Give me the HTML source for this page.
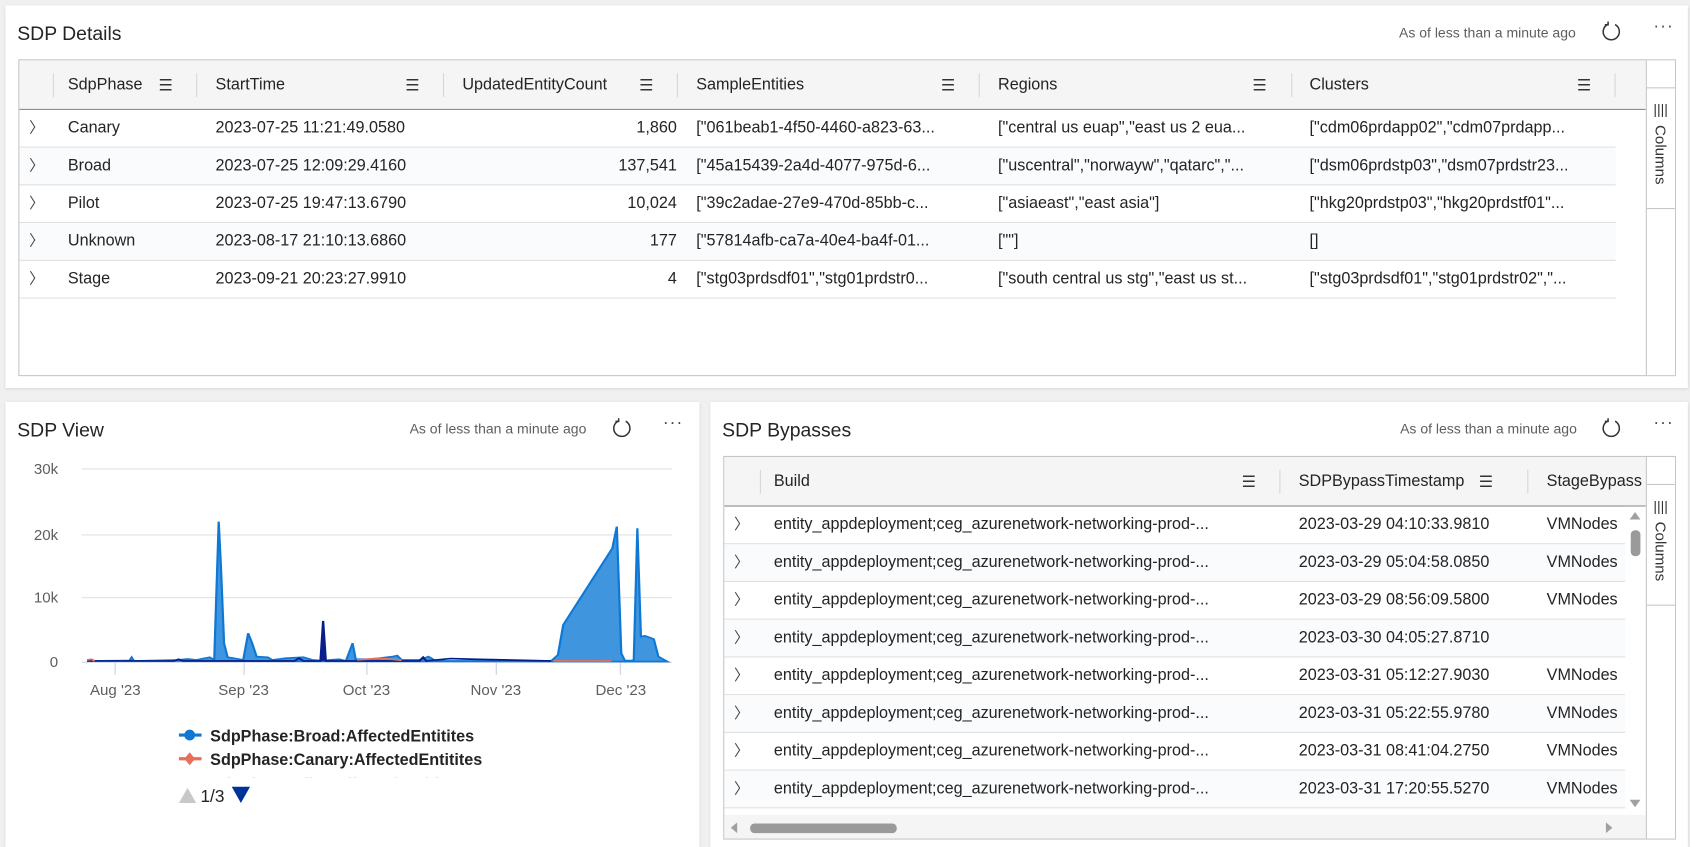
<!DOCTYPE html>
<html><head><meta charset="utf-8"><style>
*{box-sizing:border-box;margin:0;padding:0}
body{width:1690px;height:847px;background:#f0f0f0;font-family:"Liberation Sans",sans-serif;color:#201f1e;position:relative;overflow:hidden}
#w{position:absolute;left:0;top:0;width:1568px;height:786px;transform:scale(1.07781);transform-origin:0 0}
.panel{position:absolute;background:#fff;box-shadow:0 1px 3px rgba(0,0,0,.12)}
.title{position:absolute;left:11px;font-size:18px;color:#252423}
.asof{position:absolute;font-size:13px;color:#605e5c}
.ref{position:absolute;width:20px;height:20px}
.dots{position:absolute;font-size:16px;color:#444;letter-spacing:1px}
.tbl{position:absolute;border:1px solid #c8c6c4;overflow:hidden}
.hdr{position:absolute;left:0;top:0;height:46px;background:#f5f5f5;border-bottom:1px solid #8a8886;right:27px}
.h{position:absolute;top:14px;font-size:15px;color:#252423}
.sep{position:absolute;top:12px;width:1px;height:22px;background:#d6d6d6}
.mn{position:absolute;top:14px;font-size:15px;color:#333}
.row{position:absolute;left:0;height:35px;border-bottom:1px solid #e1dfdd;font-size:15px;color:#252423}
.row.alt{background:#fafbfd}
.row span{position:absolute;top:8px;white-space:nowrap}
.chev{color:#444;font-size:14px}
.colp{position:absolute;right:0;width:27px;border-left:1px solid #c8c6c4;background:#fff}
.colbox{position:absolute;left:0;width:27px;border-top:1px solid #c8c6c4;border-bottom:1px solid #c8c6c4}
.colt{position:absolute;left:5px;writing-mode:vertical-rl;font-size:14px;color:#333}
</style></head><body><div id="w">

<!-- Panel 1 -->
<div class="panel" style="left:5px;top:5px;width:1561px;height:355px">
<div class="title" style="top:16px">SDP Details</div>
<div class="asof" style="left:1293px;top:18px">As of less than a minute ago</div>
<svg class="ref" style="left:1480px;top:14px" viewBox="0 0 20 20"><path d="M7 3.5A7.5 7.5 0 1 0 13.5 3.8" fill="none" stroke="#333" stroke-width="1.4"/><path d="M7 1v3h-3" fill="none" stroke="#333" stroke-width="1.4"/></svg>
<div class="dots" style="left:1529px;top:11px">···</div>
<div class="tbl" style="left:12px;top:50px;width:1538px;height:294px">
 <div class="hdr" style="right:27px">
  <div class="sep" style="left:31px"></div>
  <div class="h" style="left:45px">SdpPhase</div><div class="mn" style="left:129px">☰</div>
  <div class="sep" style="left:164px"></div>
  <div class="h" style="left:182px">StartTime</div><div class="mn" style="left:358px">☰</div>
  <div class="sep" style="left:393px"></div>
  <div class="h" style="left:411px">UpdatedEntityCount</div><div class="mn" style="left:575px">☰</div>
  <div class="sep" style="left:610px"></div>
  <div class="h" style="left:628px">SampleEntities</div><div class="mn" style="left:855px">☰</div>
  <div class="sep" style="left:890px"></div>
  <div class="h" style="left:908px">Regions</div><div class="mn" style="left:1144px">☰</div>
  <div class="sep" style="left:1180px"></div>
  <div class="h" style="left:1197px">Clusters</div><div class="mn" style="left:1445px">☰</div>
  <div class="sep" style="left:1480px"></div>
 </div>
 <div class="row" style="top:46px;width:1481px"><span class="chev" style="left:9px;top:6px">〉</span><span style="left:45px">Canary</span><span style="left:182px">2023-07-25 11:21:49.0580</span><span style="right:871px">1,860</span><span style="left:628px">["061beab1-4f50-4460-a823-63...</span><span style="left:908px">["central us euap","east us 2 eua...</span><span style="left:1197px">["cdm06prdapp02","cdm07prdapp...</span></div>
 <div class="row alt" style="top:81px;width:1481px"><span class="chev" style="left:9px;top:6px">〉</span><span style="left:45px">Broad</span><span style="left:182px">2023-07-25 12:09:29.4160</span><span style="right:871px">137,541</span><span style="left:628px">["45a15439-2a4d-4077-975d-6...</span><span style="left:908px">["uscentral","norwayw","qatarc","...</span><span style="left:1197px">["dsm06prdstp03","dsm07prdstr23...</span></div>
 <div class="row" style="top:116px;width:1481px"><span class="chev" style="left:9px;top:6px">〉</span><span style="left:45px">Pilot</span><span style="left:182px">2023-07-25 19:47:13.6790</span><span style="right:871px">10,024</span><span style="left:628px">["39c2adae-27e9-470d-85bb-c...</span><span style="left:908px">["asiaeast","east asia"]</span><span style="left:1197px">["hkg20prdstp03","hkg20prdstf01"...</span></div>
 <div class="row alt" style="top:151px;width:1481px"><span class="chev" style="left:9px;top:6px">〉</span><span style="left:45px">Unknown</span><span style="left:182px">2023-08-17 21:10:13.6860</span><span style="right:871px">177</span><span style="left:628px">["57814afb-ca7a-40e4-ba4f-01...</span><span style="left:908px">[""]</span><span style="left:1197px">[]</span></div>
 <div class="row" style="top:186px;width:1481px"><span class="chev" style="left:9px;top:6px">〉</span><span style="left:45px">Stage</span><span style="left:182px">2023-09-21 20:23:27.9910</span><span style="right:871px">4</span><span style="left:628px">["stg03prdsdf01","stg01prdstr0...</span><span style="left:908px">["south central us stg","east us st...</span><span style="left:1197px">["stg03prdsdf01","stg01prdstr02","...</span></div>
 <div class="colp" style="top:0;height:294px"><div class="colbox" style="top:25px;height:113px"><div style="position:absolute;left:6px;top:12px;font-size:13px;color:#333">||||</div><div class="colt" style="top:34px">Columns</div></div></div>
</div>
</div>

<!-- Panel 2 -->
<div class="panel" style="left:5px;top:373px;width:644px;height:413px">
<div class="title" style="top:16px">SDP View</div>
<div class="asof" style="left:375px;top:17px">As of less than a minute ago</div>
<svg class="ref" style="left:562px;top:14px" viewBox="0 0 20 20"><path d="M7 3.5A7.5 7.5 0 1 0 13.5 3.8" fill="none" stroke="#333" stroke-width="1.4"/><path d="M7 1v3h-3" fill="none" stroke="#333" stroke-width="1.4"/></svg>
<div class="dots" style="left:610px;top:11px">···</div>
<svg style="position:absolute;left:0;top:0" width="644" height="413">
 <g font-family="Liberation Sans" font-size="14" fill="#605e5c">
  <text x="49" y="67" text-anchor="end">30k</text><text x="49" y="128" text-anchor="end">20k</text><text x="49" y="186" text-anchor="end">10k</text><text x="49" y="246" text-anchor="end">0</text>
  <text x="102" y="272" text-anchor="middle">Aug '23</text><text x="221" y="272" text-anchor="middle">Sep '23</text><text x="335" y="272" text-anchor="middle">Oct '23</text><text x="455" y="272" text-anchor="middle">Nov '23</text><text x="571" y="272" text-anchor="middle">Dec '23</text>
 </g>
 <g transform="translate(-5,-1.9) scale(0.4141,0.3092)">
  <g stroke="#e6e6e6" stroke-width="4"><line x1="183" y1="207" x2="1505" y2="207"/><line x1="183" y1="405" x2="1505" y2="405"/><line x1="183" y1="593" x2="1505" y2="593"/></g>
  <line x1="183" y1="787" x2="1505" y2="787" stroke="#d0d8e8" stroke-width="4"/>
  <g stroke="#d0d8e8" stroke-width="3"><line x1="258" y1="787" x2="258" y2="825"/><line x1="547" y1="787" x2="547" y2="825"/><line x1="822" y1="787" x2="822" y2="825"/><line x1="1112" y1="787" x2="1112" y2="825"/><line x1="1390" y1="787" x2="1390" y2="825"/></g>
  <path d="M195 783L290 782L295 772L300 783L400 780L420 777L440 780L470 772L480 780L490 365L495 500L502 730L510 772L525 775L545 780L556 700L565 730L575 770L600 772L610 780L640 775L680 772L700 780L720 782L760 778L775 783L790 730L797 778L830 778L880 770L890 767L900 780L940 780L960 770L975 782L1000 783L1235 783L1250 765L1262 675L1372 445L1382 380L1392 760L1400 782L1415 782L1420 780L1428 385L1436 710L1445 708L1460 715L1465 718L1475 770L1495 785Z" fill="#3f96de" stroke="#0f78d4" stroke-width="5"/>
  <path d="M195 783L390 783L400 778L410 783L660 783L670 775L680 783L718 783L724 663L730 783L940 783L948 772L955 783L1010 776L1060 778L1235 783" fill="none" stroke="#001d8b" stroke-width="5"/>
  <path d="M716 783L724 663L732 783Z" fill="#0a1e8c"/>
  <path d="M195 780L205 778L212 783M800 780L850 775L870 777L900 781M1240 783L1370 783" fill="none" stroke="#e8705a" stroke-width="5"/>
 </g>
 <g font-family="Liberation Sans" font-size="15" font-weight="bold" fill="#252423">
  <line x1="161" y1="309" x2="182" y2="309" stroke="#0f78d4" stroke-width="3"/><circle cx="171" cy="309" r="5" fill="#0f78d4"/>
  <text x="190" y="315">SdpPhase:Broad:AffectedEntitites</text>
  <line x1="161" y1="331" x2="182" y2="331" stroke="#e8705a" stroke-width="3"/><path d="M171 325l5 6-5 6-5-6z" fill="#e8705a"/>
  <text x="190" y="337">SdpPhase:Canary:AffectedEntitites</text>
 </g>
 <clipPath id="cp"><rect x="150" y="344" width="300" height="4"/></clipPath>
 <text x="190" y="359" clip-path="url(#cp)" font-family="Liberation Sans" font-size="15" font-weight="bold" fill="#252423">SdpPhase:Pilot:AffectedEntitites</text>
 <path d="M161 372l8-14 8 14z" fill="#c8c8c8"/><text x="181" y="371" font-family="Liberation Sans" font-size="16" fill="#252423">1/3</text><path d="M210 357l17 0-8.5 15z" fill="#00339a"/>
</svg>
</div>

<!-- Panel 3 -->
<div class="panel" style="left:659px;top:373px;width:907px;height:413px">
<div class="title" style="top:16px">SDP Bypasses</div>
<div class="asof" style="left:640px;top:17px">As of less than a minute ago</div>
<svg class="ref" style="left:826px;top:14px" viewBox="0 0 20 20"><path d="M7 3.5A7.5 7.5 0 1 0 13.5 3.8" fill="none" stroke="#333" stroke-width="1.4"/><path d="M7 1v3h-3" fill="none" stroke="#333" stroke-width="1.4"/></svg>
<div class="dots" style="left:875px;top:11px">···</div>
<div class="tbl" style="left:12px;top:50px;width:884px;height:356px">
 <div class="hdr">
  <div class="sep" style="left:33px"></div>
  <div class="h" style="left:46px">Build</div><div class="mn" style="left:480px">☰</div>
  <div class="sep" style="left:515px"></div>
  <div class="h" style="left:533px">SDPBypassTimestamp</div><div class="mn" style="left:700px">☰</div>
  <div class="sep" style="left:745px"></div>
  <div class="h" style="left:763px">StageBypass</div>
 </div>
 <div style="position:absolute;left:0;top:46px;width:836px;height:286px;overflow:hidden">
 <div class="row" style="top:0;width:836px"><span class="chev" style="left:9px;top:6px">〉</span><span style="left:46px">entity_appdeployment;ceg_azurenetwork-networking-prod-...</span><span style="left:533px">2023-03-29 04:10:33.9810</span><span style="left:763px">VMNodes</span></div>
 <div class="row alt" style="top:35px;width:836px"><span class="chev" style="left:9px;top:6px">〉</span><span style="left:46px">entity_appdeployment;ceg_azurenetwork-networking-prod-...</span><span style="left:533px">2023-03-29 05:04:58.0850</span><span style="left:763px">VMNodes</span></div>
 <div class="row" style="top:70px;width:836px"><span class="chev" style="left:9px;top:6px">〉</span><span style="left:46px">entity_appdeployment;ceg_azurenetwork-networking-prod-...</span><span style="left:533px">2023-03-29 08:56:09.5800</span><span style="left:763px">VMNodes</span></div>
 <div class="row alt" style="top:105px;width:836px"><span class="chev" style="left:9px;top:6px">〉</span><span style="left:46px">entity_appdeployment;ceg_azurenetwork-networking-prod-...</span><span style="left:533px">2023-03-30 04:05:27.8710</span></div>
 <div class="row" style="top:140px;width:836px"><span class="chev" style="left:9px;top:6px">〉</span><span style="left:46px">entity_appdeployment;ceg_azurenetwork-networking-prod-...</span><span style="left:533px">2023-03-31 05:12:27.9030</span><span style="left:763px">VMNodes</span></div>
 <div class="row alt" style="top:175px;width:836px"><span class="chev" style="left:9px;top:6px">〉</span><span style="left:46px">entity_appdeployment;ceg_azurenetwork-networking-prod-...</span><span style="left:533px">2023-03-31 05:22:55.9780</span><span style="left:763px">VMNodes</span></div>
 <div class="row" style="top:210px;width:836px"><span class="chev" style="left:9px;top:6px">〉</span><span style="left:46px">entity_appdeployment;ceg_azurenetwork-networking-prod-...</span><span style="left:533px">2023-03-31 08:41:04.2750</span><span style="left:763px">VMNodes</span></div>
 <div class="row alt" style="top:245px;width:836px"><span class="chev" style="left:9px;top:6px">〉</span><span style="left:46px">entity_appdeployment;ceg_azurenetwork-networking-prod-...</span><span style="left:533px">2023-03-31 17:20:55.5270</span><span style="left:763px">VMNodes</span></div>
 </div>
 <div style="position:absolute;left:836px;top:46px;width:20px;height:286px;background:#fff"></div>
 <svg style="position:absolute;left:836px;top:46px" width="20" height="310"><path d="M4 12l5-7 5 7z" fill="#a0a0a0"/><rect x="5" y="22" width="9" height="24" rx="4" fill="#9a9a9a"/><path d="M4 272l5 7 5-7z" fill="#a0a0a0"/></svg>
 <div style="position:absolute;left:0;top:332px;width:856px;height:24px;background:#f5f5f5"></div>
 <svg style="position:absolute;left:0;top:332px" width="856" height="24"><path d="M12 7l-6 5 6 5z" fill="#a0a0a0"/><rect x="24" y="8" width="136" height="9" rx="4" fill="#9a9a9a"/><path d="M818 7l6 5-6 5z" fill="#a0a0a0"/></svg>
 <div class="colp" style="top:0;height:356px"><div class="colbox" style="top:25px;height:113px"><div style="position:absolute;left:6px;top:12px;font-size:13px;color:#333">||||</div><div class="colt" style="top:34px">Columns</div></div></div>
</div>
</div>
</div></body></html>
